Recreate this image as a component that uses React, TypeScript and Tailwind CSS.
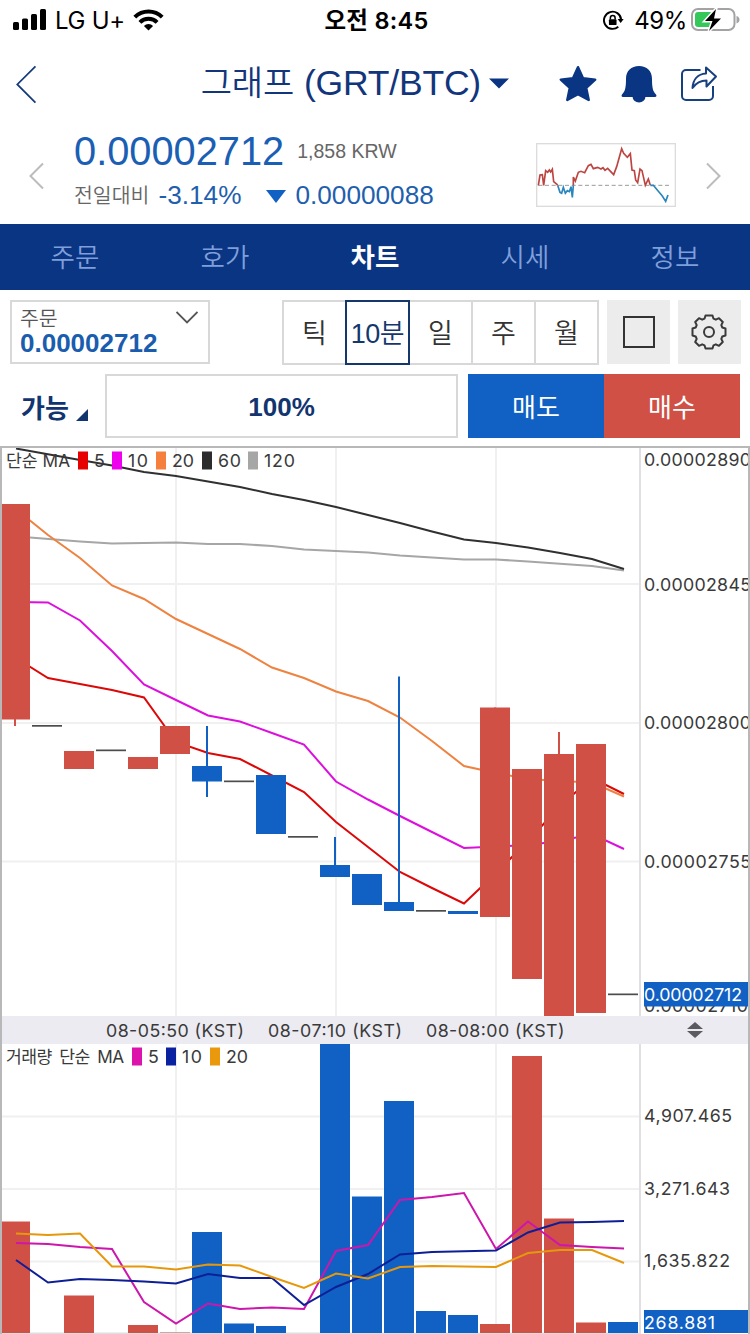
import React, { useState } from 'react';

type Point = [number, number];

interface Candle {
    top: number;
    bottom: number;
    kind: 'up' | 'down' | 'flat';
    high?: number;
    low?: number;
}

const RED = '#d05046';
const BLUE = '#1160c4';
const STEP = 32;
const CHART_FONT = 'Inter, "Noto Sans CJK KR", sans-serif';

const candles: Candle[] = [
    { top: 504, bottom: 719.5, kind: 'up', low: 726 },
    { top: 726, bottom: 726, kind: 'flat' },
    { top: 751, bottom: 769, kind: 'up' },
    { top: 750.5, bottom: 750.5, kind: 'flat' },
    { top: 757, bottom: 769, kind: 'up' },
    { top: 726, bottom: 754, kind: 'up' },
    { top: 766, bottom: 781.5, kind: 'down', high: 726, low: 797 },
    { top: 781.5, bottom: 781.5, kind: 'flat' },
    { top: 775, bottom: 834, kind: 'down' },
    { top: 837, bottom: 837, kind: 'flat' },
    { top: 865, bottom: 877, kind: 'down', high: 837 },
    { top: 874, bottom: 905, kind: 'down' },
    { top: 902, bottom: 911, kind: 'down', high: 676.5 },
    { top: 911, bottom: 911, kind: 'flat' },
    { top: 911, bottom: 914, kind: 'down' },
    { top: 707.5, bottom: 917, kind: 'up' },
    { top: 769, bottom: 979, kind: 'up' },
    { top: 754, bottom: 1016, kind: 'up', high: 732 },
    { top: 744, bottom: 1013, kind: 'up' },
    { top: 994.5, bottom: 994.5, kind: 'flat' },
];

const priceLines: { color: string; points: Point[] }[] = [
    {
        color: '#a6a6a6',
        points: [[16, 537], [30, 537.5], [80, 541.5], [112, 543.5], [176, 542.5], [208, 544], [240, 544], [272, 546], [304, 549.5], [368, 552.5], [400, 555.5], [464, 559.5], [496, 559.5], [528, 561.5], [592, 566], [624, 570.5]],
    },
    {
        color: '#303030',
        points: [[16, 448.5], [80, 460], [112, 465.5], [144, 472], [176, 476], [208, 481.5], [240, 487], [272, 494], [304, 500], [336, 507], [368, 515], [400, 523], [432, 531.5], [464, 539.5], [496, 543], [528, 547.5], [560, 553], [592, 559], [624, 569]],
    },
    {
        color: '#ee8240',
        points: [[16, 509], [30, 520.5], [48, 535], [80, 558], [112, 585.5], [144, 599], [176, 619], [208, 634], [240, 649], [272, 667.5], [304, 678], [336, 691.5], [368, 701], [400, 717.5], [432, 741], [464, 766], [496, 773], [528, 779], [560, 781], [592, 782.5], [624, 796.5]],
    },
    {
        color: '#dc10dc',
        points: [[16, 602], [48, 602.5], [80, 620.5], [112, 651], [144, 684.5], [176, 700], [208, 715.5], [240, 721.5], [272, 733], [304, 744.5], [336, 781.5], [368, 799.5], [400, 816], [432, 832], [464, 848], [496, 846.5], [528, 845], [560, 841], [592, 834], [624, 849]],
    },
    {
        color: '#dc0808',
        points: [[16, 658], [48, 678], [80, 684], [112, 690], [144, 697.5], [176, 742], [208, 753], [240, 759], [272, 775.5], [304, 792], [336, 822], [368, 847], [400, 872], [432, 888], [464, 903.5], [496, 873], [528, 841], [560, 806], [592, 778], [624, 794]],
    },
];

const volumes: { index: number; top: number; color: string }[] = [
    { index: 0, top: 1221.5, color: RED },
    { index: 2, top: 1295.5, color: RED },
    { index: 4, top: 1325, color: RED },
    { index: 5, top: 1332.5, color: RED },
    { index: 6, top: 1232, color: BLUE },
    { index: 7, top: 1323.5, color: BLUE },
    { index: 8, top: 1326, color: BLUE },
    { index: 10, top: 1044, color: BLUE },
    { index: 11, top: 1196.5, color: BLUE },
    { index: 12, top: 1101, color: BLUE },
    { index: 13, top: 1311, color: BLUE },
    { index: 14, top: 1315, color: BLUE },
    { index: 15, top: 1324, color: RED },
    { index: 16, top: 1056, color: RED },
    { index: 17, top: 1218.5, color: RED },
    { index: 18, top: 1322.5, color: RED },
    { index: 19, top: 1322, color: BLUE },
];

const volumeLines: { color: string; points: Point[] }[] = [
    {
        color: '#cc16ac',
        points: [[16, 1243], [48, 1244], [80, 1247], [112, 1249], [144, 1302], [176, 1323.5], [208, 1303.5], [240, 1309], [272, 1307.5], [304, 1309], [336, 1251], [368, 1245], [400, 1200], [432, 1197], [464, 1193], [496, 1249], [528, 1221.5], [560, 1245], [592, 1247], [624, 1248.5]],
    },
    {
        color: '#0e1f96',
        points: [[16, 1260], [48, 1282.5], [80, 1279], [112, 1280], [144, 1281.5], [176, 1283.5], [208, 1274], [240, 1278], [272, 1278], [304, 1305], [336, 1287], [368, 1274], [400, 1254.5], [432, 1252], [496, 1250.5], [528, 1232.5], [560, 1222.5], [592, 1222], [624, 1221]],
    },
    {
        color: '#e6980c',
        points: [[16, 1233.5], [48, 1235], [80, 1233.5], [112, 1266.5], [144, 1266.5], [176, 1269.5], [208, 1264.5], [240, 1265.5], [272, 1277], [304, 1288], [336, 1273.5], [368, 1278.5], [400, 1267], [432, 1266], [496, 1267], [528, 1253], [560, 1250], [592, 1250], [624, 1263]],
    },
];

const toPath = (points: Point[]) => points.map((p) => p.join(',')).join(' ');

const candleX = (i: number) => (i === 0 ? 2 : i * STEP);
const candleWidth = (i: number) => (i === 0 ? 28 : 30);

const Legend: React.FC<{ y: number; items: { x: number; w: number; label: string; color: string }[] }> = ({ y, items }) => (
    <>
        {items.map((item) => (
            <g key={item.label}>
                <rect x={item.x} y={y - 15} width="10" height="18" fill={item.color} />
                <text x={item.x + 16} y={y + 0.5} textLength={item.w}>{item.label}</text>
            </g>
        ))}
    </>
);

const StatusBar: React.FC = () => (
    <div className="h-10 grid grid-cols-3 items-center pl-[13px] pr-[10px] font-[Inter,'Noto_Sans_CJK_KR',sans-serif] text-black">
        <div className="flex items-center">
            <svg width="34" height="22" viewBox="0 0 34 22">
                <rect x="0" y="13" width="6" height="8" rx="1.5" />
                <rect x="9" y="9.5" width="6" height="11.5" rx="1.5" />
                <rect x="18" y="5" width="6" height="16" rx="1.5" />
                <rect x="27" y="0" width="6" height="21" rx="1.5" />
            </svg>
            <span className="ml-[8px] mt-[2px] text-[24px] tracking-[-0.3px] whitespace-nowrap">LG U+</span>
            <svg className="ml-[8px]" width="31" height="22" viewBox="0 0 31 22" fill="none" stroke="#000" strokeWidth="4">
                <path d="M1.800 8.200a19.400 19.400 0 0 1 27.400 0" />
                <path d="M6.900 13.300a12.200 12.200 0 0 1 17.200 0" />
                <path d="M15.500 21.500l-4.600-4.600a6.500 6.500 0 0 1 9.200 0z" fill="#000" stroke="none" />
            </svg>
        </div>
        <div className="mt-[2px] text-center text-[23.5px] font-semibold tracking-[0.3px]">오전 8:45</div>
        <div className="flex items-center justify-end">
            <svg width="21" height="21" viewBox="0 0 22 22" fill="none" stroke="#000" strokeWidth="2">
                <path d="M16 17.500A9 9 0 1 1 19 10" />
                <path d="M15.300 9.300h6.400l-3.200 4.400z" fill="#000" stroke="none" />
                <rect x="6.2" y="9.8" width="8" height="6" rx="1" fill="#000" stroke="none" />
                <path d="M7.700 10V8.300a2.500 2.500 0 0 1 5 0V10" strokeWidth="1.6" />
            </svg>
            <span className="ml-[10px] mt-[2px] text-[24px] tracking-[-0.4px]">49%</span>
            <svg className="ml-[4px]" width="49" height="26" viewBox="0 0 49 26">
                <rect x="1" y="2" width="42.5" height="21" rx="6" fill="none" stroke="#a3a3a3" strokeWidth="2" />
                <path d="M45.500 9v7.500c2-.6 3-2 3-3.700s-1-3.200-3-3.800z" fill="#a3a3a3" />
                <rect x="4" y="5" width="18" height="15" rx="3" fill="#34c759" />
                <path d="M25 2L14 14h7.500L18 24 30 11.500h-7z" fill="#000" stroke="#fff" strokeWidth="3" paintOrder="stroke" />
            </svg>
        </div>
    </div>
);

const Header: React.FC = () => (
    <header className="h-[88px] flex items-center justify-between pl-4 pr-8 pb-px">
        <svg width="24" height="44" viewBox="0 0 24 44" fill="none" stroke="#143a7c" strokeWidth="2">
            <path d="M22.500 1.500L1.500 22.500l21 21" />
        </svg>
        <div className="flex items-center ml-[164px]">
            <h1 className="flex items-baseline text-[35.5px] font-normal tracking-[-0.2px] text-[#12357c] whitespace-nowrap">
                <span className="text-[34px] font-[350]">그래프</span>
                <span className="ml-[10px]">(GRT/BTC)</span>
            </h1>
            <svg className="ml-2" width="20" height="11" viewBox="0 0 20 11">
                <path d="M0 .5h20l-10 10z" fill="#0b3482" />
            </svg>
        </div>
        <div className="flex items-center gap-[22px] ml-[49px]">
            <svg width="40" height="40" viewBox="0 0 40 40" fill="#0a3583" stroke="#0a3583" strokeWidth="2.5" strokeLinejoin="round">
                <path d="M20 3.200l5 11 12.200 1.500-9 8.200 2.500 12L20 30.200 9.300 35.900l2.500-12-9-8.200L15 14.200z" />
            </svg>
            <svg width="38" height="40" viewBox="0 0 38 40" fill="#0a3583">
                <path d="M19 2c7.800 0 13 4.800 13 13 0 9 1 12.500 4 15.500.8 1 .5 2.500-1 2.500H3c-1.500 0-1.800-1.500-1-2.500C5 27.500 6 24 6 15 6 6.800 11.200 2 19 2z" />
                <path d="M12.500 32.500h13a6.500 6 0 0 1-13 0z" />
            </svg>
            <svg width="38" height="38" viewBox="0 0 38 38" fill="none" stroke="#17407f" strokeWidth="2" strokeLinejoin="round">
                <path d="M20.500 5H6a4 4 0 0 0-4 4v22a4 4 0 0 0 4 4h23a4 4 0 0 0 4-4v-10" />
                <path d="M26 2.500l10 9-9.500 10v-6c-6.500 0-10.500 2.500-14 7.500.5-8 5-14 13.500-14.500z" />
            </svg>
        </div>
    </header>
);

const MiniChart: React.FC = () => (
    <svg className="-mt-[2px]" width="140" height="64" viewBox="483 429 420 192" fill="none" strokeWidth="5">
        <rect x="485" y="431" width="416" height="188" stroke="#dcdcdc" strokeWidth="4" />
        <path d="M490 556H886" stroke="#9a9a9a" strokeWidth="3" strokeDasharray="12 8" />
        <path
            d="M490 556L495 525 502 524 506 556 512 512 518 517 523 510 527 516 532 508 536 545 545 552 548 556M595 556V531L601 543 610 517 618 514 629 518 640 497 648 493 655 506 668 502 678 507 684 503 690 511 698 505 716 524 725 500 740 446 746 460 757 472 766 461 771 510 778 512 782 540 788 548 795 507 801 512 811 556 820 537 826 556"
            stroke="#bd4541"
        />
        <path d="M548 556L555 577 560 580 565 562 571 580 577 572 583 575 588 560 592 592 595 556M826 556H835L850 574 862 588 872 604 879 585" stroke="#2a86bc" />
    </svg>
);

const PriceSummary: React.FC = () => (
    <section className="h-24 flex items-center px-[29px] pb-px">
        <svg width="15" height="28" viewBox="0 0 15 28" fill="none" stroke="#bcbcbc" strokeWidth="2">
            <path d="M14 1.500L1.500 14 14 26.500" />
        </svg>
        <div className="ml-[30px] -mt-[5px] flex-1">
            <div className="flex items-center h-[44px]">
                <span className="text-[39.8px] text-[#1a5fb4]">0.00002712</span>
                <span className="ml-[13px] text-[19.5px] text-[#666]">1,858 KRW</span>
            </div>
            <div className="flex items-center h-[42px] text-[26.2px] text-[#1f5fae]">
                <span className="mt-[3px] text-[20.5px] font-[350] text-[#666]">전일대비</span>
                <span className="ml-[9px]">-3.14%</span>
                <svg className="ml-[25px] mt-[2px]" width="20" height="13" viewBox="0 0 20 13">
                    <path d="M0 0h20L10 13z" fill={BLUE} />
                </svg>
                <span className="ml-[9px]">0.00000088</span>
            </div>
        </div>
        <MiniChart />
        <svg className="ml-[30px]" width="15" height="28" viewBox="0 0 15 28" fill="none" stroke="#bcbcbc" strokeWidth="2">
            <path d="M1 1.500L13.500 14 1 26.500" />
        </svg>
    </section>
);

const tabs = ['주문', '호가', '차트', '시세', '정보'];
const periods = ['틱', '10분', '일', '주', '월'];

const PriceChart: React.FC = () => (
    <svg className="block" width="746" height="568" viewBox="2 448 746 568" fontFamily={CHART_FONT} fontSize="17.8" fill="#3a3a3a">
        <g fill="#f0f0f1">
            {[176, 336, 496].map((x) => <rect key={x} x={x - 1} y="448" width="2" height="568" />)}
            {[584, 723, 861.5].map((y) => <rect key={y} x="2" y={y - 1} width="637" height="2" />)}
        </g>
        <rect x="639" y="448" width="2" height="568" fill="#e0e0e2" />
        {priceLines.map((line) => (
            <polyline key={line.color} points={toPath(line.points)} fill="none" stroke={line.color} strokeWidth="2" />
        ))}
        {candles.map((c, i) => {
            if (c.kind === 'flat') {
                return <rect key={i} x={candleX(i)} y={c.top - 1} width="30" height="1.700" fill="#4c4c4c" />;
            }
            const color = c.kind === 'up' ? RED : BLUE;
            const high = c.high ?? c.top;
            const low = c.low ?? c.bottom;
            return (
                <g key={i} fill={color}>
                    <rect x={i * STEP + 14} y={high} width="2" height={low - high} />
                    <rect x={candleX(i)} y={c.top} width={candleWidth(i)} height={c.bottom - c.top} />
                </g>
            );
        })}
        <text x="6" y="466.500" fontSize="17.2" textLength="64">단순 MA</text>
        <Legend
            y={466.500}
            items={[
                { x: 78, w: 10, label: '5', color: '#e60000' },
                { x: 112, w: 20, label: '10', color: '#ee00ee' },
                { x: 156, w: 22, label: '20', color: '#f5803e' },
                { x: 202, w: 23, label: '60', color: '#2c2c2c' },
                { x: 248, w: 31, label: '120', color: '#a6a6a6' },
            ]}
        />
        <g>
            <text x="644" y="466" textLength="107">0.00002890</text>
            <text x="644" y="591" textLength="107">0.00002845</text>
            <text x="644" y="729" textLength="107">0.00002800</text>
            <text x="644" y="868" textLength="107">0.00002755</text>
            <text x="644" y="1012" textLength="104">0.00002710</text>
        </g>
        <rect x="644" y="982" width="104" height="24.5" fill={BLUE} />
        <text x="644" y="1001" textLength="98" fill="#fff">0.00002712</text>
    </svg>
);

const TimeAxis: React.FC = () => (
    <svg className="block" width="746" height="28" viewBox="2 1016 746 28" fontFamily={CHART_FONT} fontSize="17.8" fill="#3a3a3a">
        <rect x="2" y="1016" width="746" height="28" fill="#ebebf1" />
        <text x="106" y="1037" textLength="138">08-05:50 (KST)</text>
        <text x="268" y="1037" textLength="134">08-07:10 (KST)</text>
        <text x="426" y="1037" textLength="138.5">08-08:00 (KST)</text>
        <path d="M687 1029l8-7 8 7zM687 1031l8 7 8-7z" fill="#5c5c60" />
    </svg>
);

const VolumeChart: React.FC = () => (
    <svg className="block" width="746" height="290" viewBox="2 1044 746 290" fontFamily={CHART_FONT} fontSize="17.8" fill="#3a3a3a">
        <g fill="#f0f0f1">
            {[176, 336, 496].map((x) => <rect key={x} x={x - 1} y="1044" width="2" height="290" />)}
            {[1116.5, 1189, 1261.5].map((y) => <rect key={y} x="2" y={y - 1} width="637" height="2" />)}
            <rect x="2" y="1332.500" width="637" height="1.500" fill="#dedee0" />
        </g>
        <rect x="639" y="1044" width="2" height="290" fill="#e0e0e2" />
        {volumes.map((v) => (
            <rect key={v.index} x={candleX(v.index)} y={v.top} width={candleWidth(v.index)} height={1333 - v.top} fill={v.color} />
        ))}
        {volumeLines.map((line) => (
            <polyline key={line.color} points={toPath(line.points)} fill="none" stroke={line.color} strokeWidth="2" />
        ))}
        <text x="6" y="1062.500" fontSize="17.2" wordSpacing="3" textLength="118">거래량 단순 MA</text>
        <Legend
            y={1062.500}
            items={[
                { x: 132, w: 10, label: '5', color: '#dc14ac' },
                { x: 166, w: 20, label: '10', color: '#0b22a0' },
                { x: 210, w: 22, label: '20', color: '#ea980c' },
            ]}
        />
        <text x="644" y="1122" textLength="88">4,907.465</text>
        <text x="644" y="1195" textLength="86">3,271.643</text>
        <text x="644" y="1267" textLength="86">1,635.822</text>
        <rect x="644" y="1310" width="104" height="23" fill={BLUE} />
        <text x="644" y="1329" textLength="71" fill="#fff">268.881</text>
    </svg>
);

const App: React.FC = () => {
    const [tab, setTab] = useState('차트');
    const [period, setPeriod] = useState('10분');

    return (
        <div className="w-[750px] h-[1334px] overflow-hidden bg-white font-['Liberation_Sans','Noto_Sans_CJK_KR',sans-serif] leading-none">
            <StatusBar />
            <Header />
            <PriceSummary />

            <nav className="h-[66px] grid grid-cols-5 bg-[#0a3583] text-[26.5px]">
                {tabs.map((name) => (
                    <button
                        key={name}
                        onClick={() => setTab(name)}
                        className={name === tab ? 'pt-[2px] font-bold text-white' : 'pt-[3px] font-[350] text-[#7f9fdb]'}
                    >
                        {name}
                    </button>
                ))}
            </nav>

            <div className="flex pt-[10px] pl-[10px] pr-[9px]">
                <button className="w-[200px] h-16 border-2 border-[#d8d8d8] flex justify-between text-left pl-2 pr-[10px]">
                    <span>
                        <span className="block mt-[7px] text-[20.5px] font-[350] text-[#555]">주문</span>
                        <span className="block text-[26px] font-bold text-[#1a5cae]">0.00002712</span>
                    </span>
                    <svg className="mt-[9px]" width="22" height="13" viewBox="0 0 22 13" fill="none" stroke="#555" strokeWidth="1.8">
                        <path d="M.5 1L11 11.500 21.500 1" />
                    </svg>
                </button>
                <div className="ml-[72px] flex h-[65px] border-2 border-[#d8d8d8] w-[317px] text-[27px] font-[350] text-[#333]">
                    {periods.map((p) => (
                        <button
                            key={p}
                            onClick={() => setPeriod(p)}
                            className={
                                p === period
                                    ? 'w-[65px] shrink-0 -my-[2px] pt-[4px] border-2 border-[#14386c] text-[#14386c] whitespace-nowrap tracking-[-0.5px]'
                                    : 'flex-1 pt-[4px] border-r-2 border-[#d8d8d8] first:border-r-0 last:border-r-0'
                            }
                        >
                            {p}
                        </button>
                    ))}
                </div>
                <button className="ml-2 w-[63px] h-16 bg-[#ececec] flex items-center justify-center">
                    <span className="-mr-[1px] w-8 h-8 border-2 border-[#333]" />
                </button>
                <button className="ml-2 w-[63px] h-16 bg-[#ececec] flex items-center justify-center">
                    <svg className="-ml-[2px]" width="36" height="36" viewBox="-18 -18 36 36" fill="none" stroke="#3a3a3a" strokeWidth="2" strokeLinejoin="round">
                        <path d="M-3.500-16.500H3.500L4.500-13.300 6.800-12.300 10-13.800 13.800-10 12.300-6.800 13.300-4.500 16.500-3.500V3.500L13.300 4.500 12.300 6.800 13.800 10 10 13.800 6.800 12.300 4.500 13.300 3.500 16.500H-3.500L-4.500 13.300-6.800 12.300-10 13.800-13.800 10-12.300 6.800-13.300 4.500-16.500 3.500V-3.500L-13.300-4.500-12.300-6.800-13.800-10-10-13.800-6.800-12.300-4.500-13.300z" />
                        <circle r="5" />
                    </svg>
                </button>
            </div>

            <div className="flex h-16 mt-[9px] mb-2 pr-[10px]">
                <button className="w-[105px] flex items-center pl-[21px] pt-[6px] text-[26px] font-bold text-[#12356f]">
                    가능
                    <svg className="ml-[7px] mt-[12px]" width="12" height="12" viewBox="0 0 12 12">
                        <path d="M12 0v12H0z" fill="#12356f" />
                    </svg>
                </button>
                <button className="w-[353px] pt-[2px] border-2 border-[#d8d8d8] text-[26px] font-bold text-[#12356f]">100%</button>
                <button className="ml-[10px] pt-[3px] flex-1 bg-[#1160c4] text-[26px] font-normal text-white">매도</button>
                <button className="flex-1 pt-[3px] bg-[#d05046] text-[26px] font-normal text-white">매수</button>
            </div>

            <main className="border-2 border-b-0 border-[#b8b8b8]">
                <PriceChart />
                <TimeAxis />
                <VolumeChart />
            </main>
        </div>
    );
};

export default App;
